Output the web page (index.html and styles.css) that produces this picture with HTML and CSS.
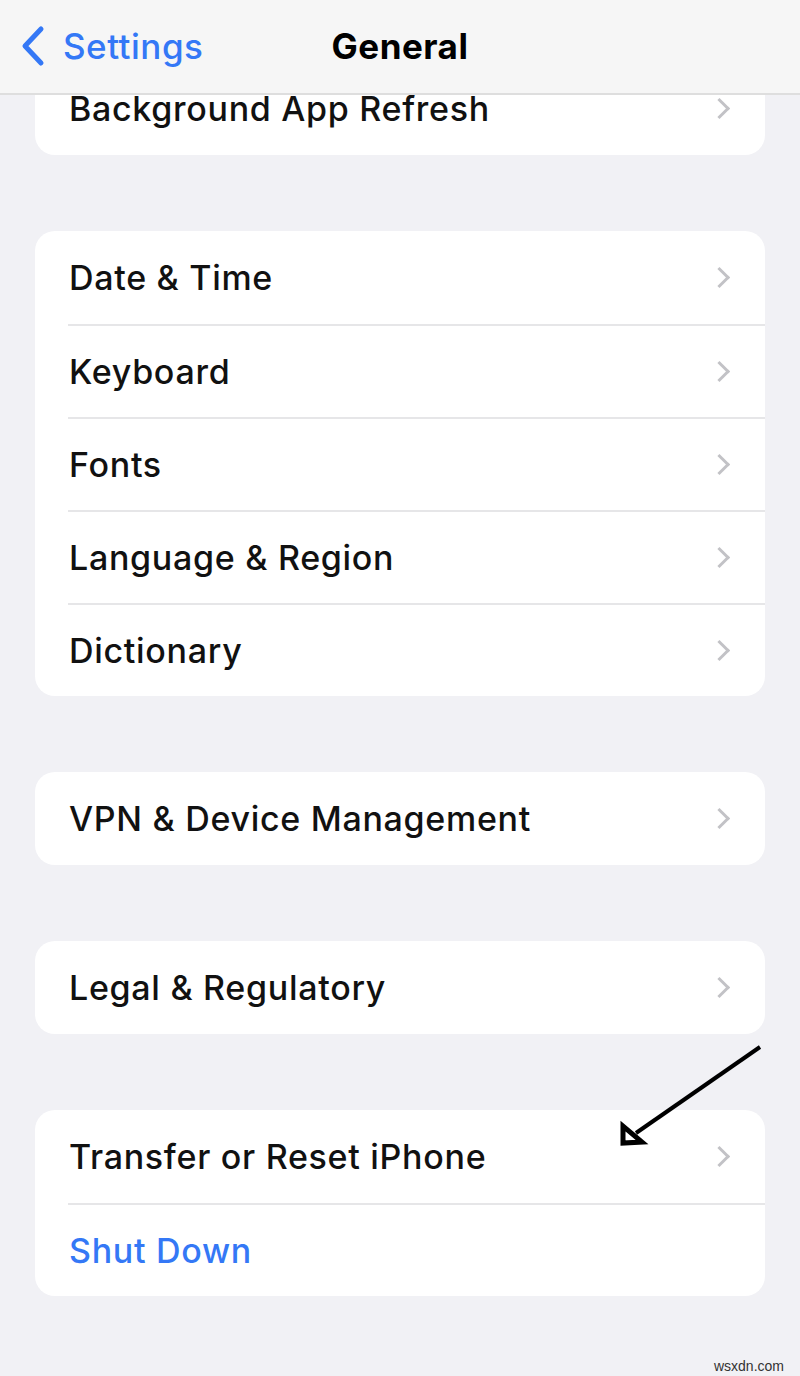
FILE: index.html
```html
<!DOCTYPE html>
<html lang="en">
<head>
    <meta charset="UTF-8" />
    <title>General</title>
    <link rel="stylesheet" href="styles.css">
</head>
<body>
    <div class="nav-bar">
        <a class="back-link" href="#">
            <svg class="back-icon" width="28" height="42" viewBox="0 0 28 42">
                <path d="M23 4 L7 21 L23 38" fill="none" stroke="#3478f6" stroke-width="5" stroke-linecap="round" stroke-linejoin="round" />
            </svg>
            <span>Settings</span>
        </a>
        <h1 class="nav-title">General</h1>
    </div>

    <div class="content">
        <div class="group first-group">
            <div class="row"><span>Background App Refresh</span><i class="chevron"></i></div>
        </div>

        <div class="group">
            <div class="row"><span>Date &amp; Time</span><i class="chevron"></i></div>
            <div class="row"><span>Keyboard</span><i class="chevron"></i></div>
            <div class="row"><span>Fonts</span><i class="chevron"></i></div>
            <div class="row"><span>Language &amp; Region</span><i class="chevron"></i></div>
            <div class="row"><span>Dictionary</span><i class="chevron"></i></div>
        </div>

        <div class="group">
            <div class="row"><span>VPN &amp; Device Management</span><i class="chevron"></i></div>
        </div>

        <div class="group">
            <div class="row"><span>Legal &amp; Regulatory</span><i class="chevron"></i></div>
        </div>

        <div class="group">
            <div class="row"><span>Transfer or Reset iPhone</span><i class="chevron"></i></div>
            <div class="row action"><span>Shut Down</span></div>
        </div>
    </div>

    <!-- arrow drawn over the screenshot -->
    <svg class="pointer-arrow" width="800" height="1376" viewBox="0 0 800 1376">
        <line x1="760" y1="1047" x2="636" y2="1133" stroke="#000" stroke-width="4" />
        <path d="M623 1126 L623 1143 L642 1142 Z" fill="none" stroke="#000" stroke-width="5" stroke-linejoin="miter" />
    </svg>

    <div class="watermark">wsxdn.com</div>
</body>
</html>
```

FILE: styles.css
```css
* {
    box-sizing: border-box;
}

body {
    font-family: Inter, "Liberation Sans", Arial, sans-serif;
    background-color: #f1f1f5;
    margin: 0;
    width: 800px;
    height: 1376px;
    position: relative;
    overflow: hidden;
}

.nav-bar {
    position: absolute;
    top: 0;
    left: 0;
    right: 0;
    height: 95px;
    background: #f6f6f6;
    border-bottom: 2px solid #dedede;
    z-index: 2;
}

.back-link {
    position: absolute;
    left: 18px;
    top: 25px;
    display: flex;
    align-items: center;
    gap: 17px;
    color: #3478f6;
    text-decoration: none;
    font-size: 35px;
    font-weight: 500;
    letter-spacing: 0.5px;
}

    .back-icon {
        display: block;
    }

.nav-title {
    margin: 0;
    text-align: center;
    line-height: 93px;
    font-size: 35px;
    font-weight: 700;
    letter-spacing: 0.5px;
    color: #000;
}

.content {
    padding: 62px 35px 0;
    display: flex;
    flex-direction: column;
    gap: 76px;
}

.group {
    background: #fff;
    border-radius: 20px;
    overflow: hidden;
}

.row {
    height: 93px;
    display: flex;
    align-items: center;
    justify-content: space-between;
    padding: 0 38px 0 34px;
    font-size: 34px;
    font-weight: 500;
    letter-spacing: 0.7px;
    color: #111;
}

    .row + .row {
        border-top: 2px solid #e6e6e8;
        margin-left: 33px;
        padding-left: 1px;
    }

    .row.action {
        color: #3478f6;
    }

.chevron {
    width: 15px;
    height: 15px;
    border-top: 3px solid #c2c2c6;
    border-right: 3px solid #c2c2c6;
    transform: rotate(45deg);
}

.pointer-arrow {
    position: absolute;
    top: 0;
    left: 0;
    z-index: 3;
}

.watermark {
    position: absolute;
    right: 16px;
    bottom: 2px;
    font-family: "Liberation Sans", Arial, sans-serif;
    font-size: 14px;
    color: #333;
    z-index: 3;
}
```
